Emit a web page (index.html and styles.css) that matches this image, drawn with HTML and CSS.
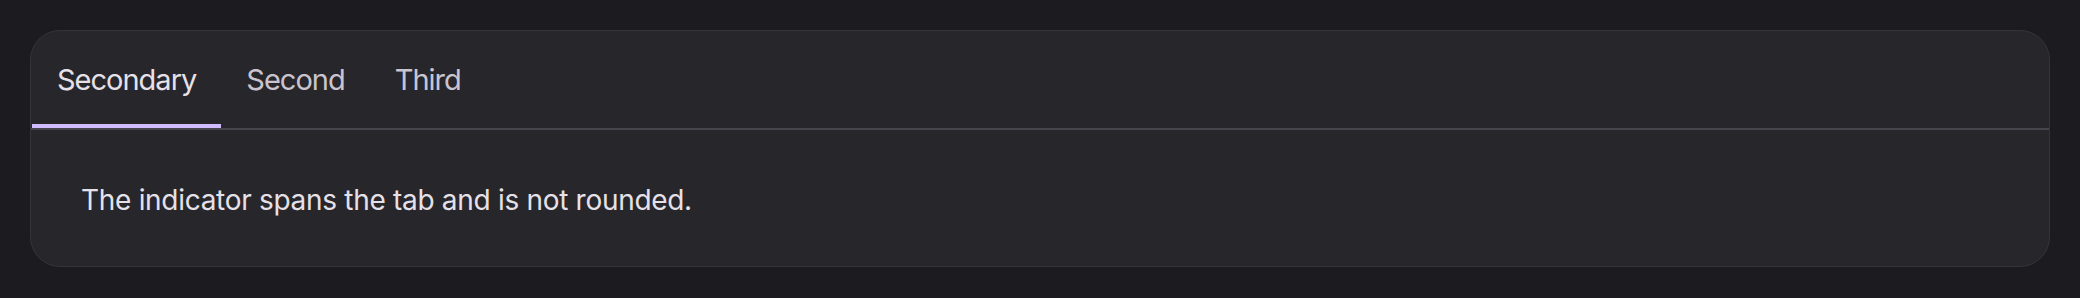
FILE: index.html
```html
<!DOCTYPE html>
<html lang="en">
<head>
<meta charset="utf-8">
<title>Tabs</title>
<link rel="stylesheet" href="styles.css">
</head>
<body>
  <div class="card">
    <div class="tablist" role="tablist">
      <button class="tab active" role="tab">Secondary</button>
      <button class="tab" role="tab">Second</button>
      <button class="tab" role="tab">Third</button>
    </div>
    <div class="panel">
      <p class="panel-text">The indicator spans the tab and is not rounded.</p>
    </div>
  </div>
</body>
</html>
```
FILE: styles.css
```css
html, body {
  margin: 0;
  padding: 0;
  background: #1c1b1f;
}
body {
  padding: 30px;
  font-family: Inter, "Noto Sans", sans-serif;
}
.card {
  box-sizing: border-box;
  width: 2020px;
  height: 237px;
  background: #27262b;
  border: 1px solid #36343b;
  border-radius: 30px;
  overflow: hidden;
  display: flex;
  flex-direction: column;
}
.tablist {
  display: flex;
  border-bottom: 2px solid #46444c;
  padding-left: 1px;
}
.tab {
  box-sizing: border-box;
  height: 97px;
  padding: 4px 25px 0;
  background: none;
  border: none;
  border-bottom: 4px solid transparent;
  font-family: inherit;
  font-size: 29px;
  letter-spacing: -1px;
  color: #cac4cf;
  cursor: pointer;
}
.tab.active {
  color: #e6e1e9;
  border-bottom-color: #d0bcff;
}
.panel {
  flex: 1;
  display: flex;
  align-items: center;
  padding: 3px 50px 0;
}
.panel-text {
  margin: 0;
  font-size: 28px;
  letter-spacing: -0.3px;
  color: #e6e1e9;
}
```
